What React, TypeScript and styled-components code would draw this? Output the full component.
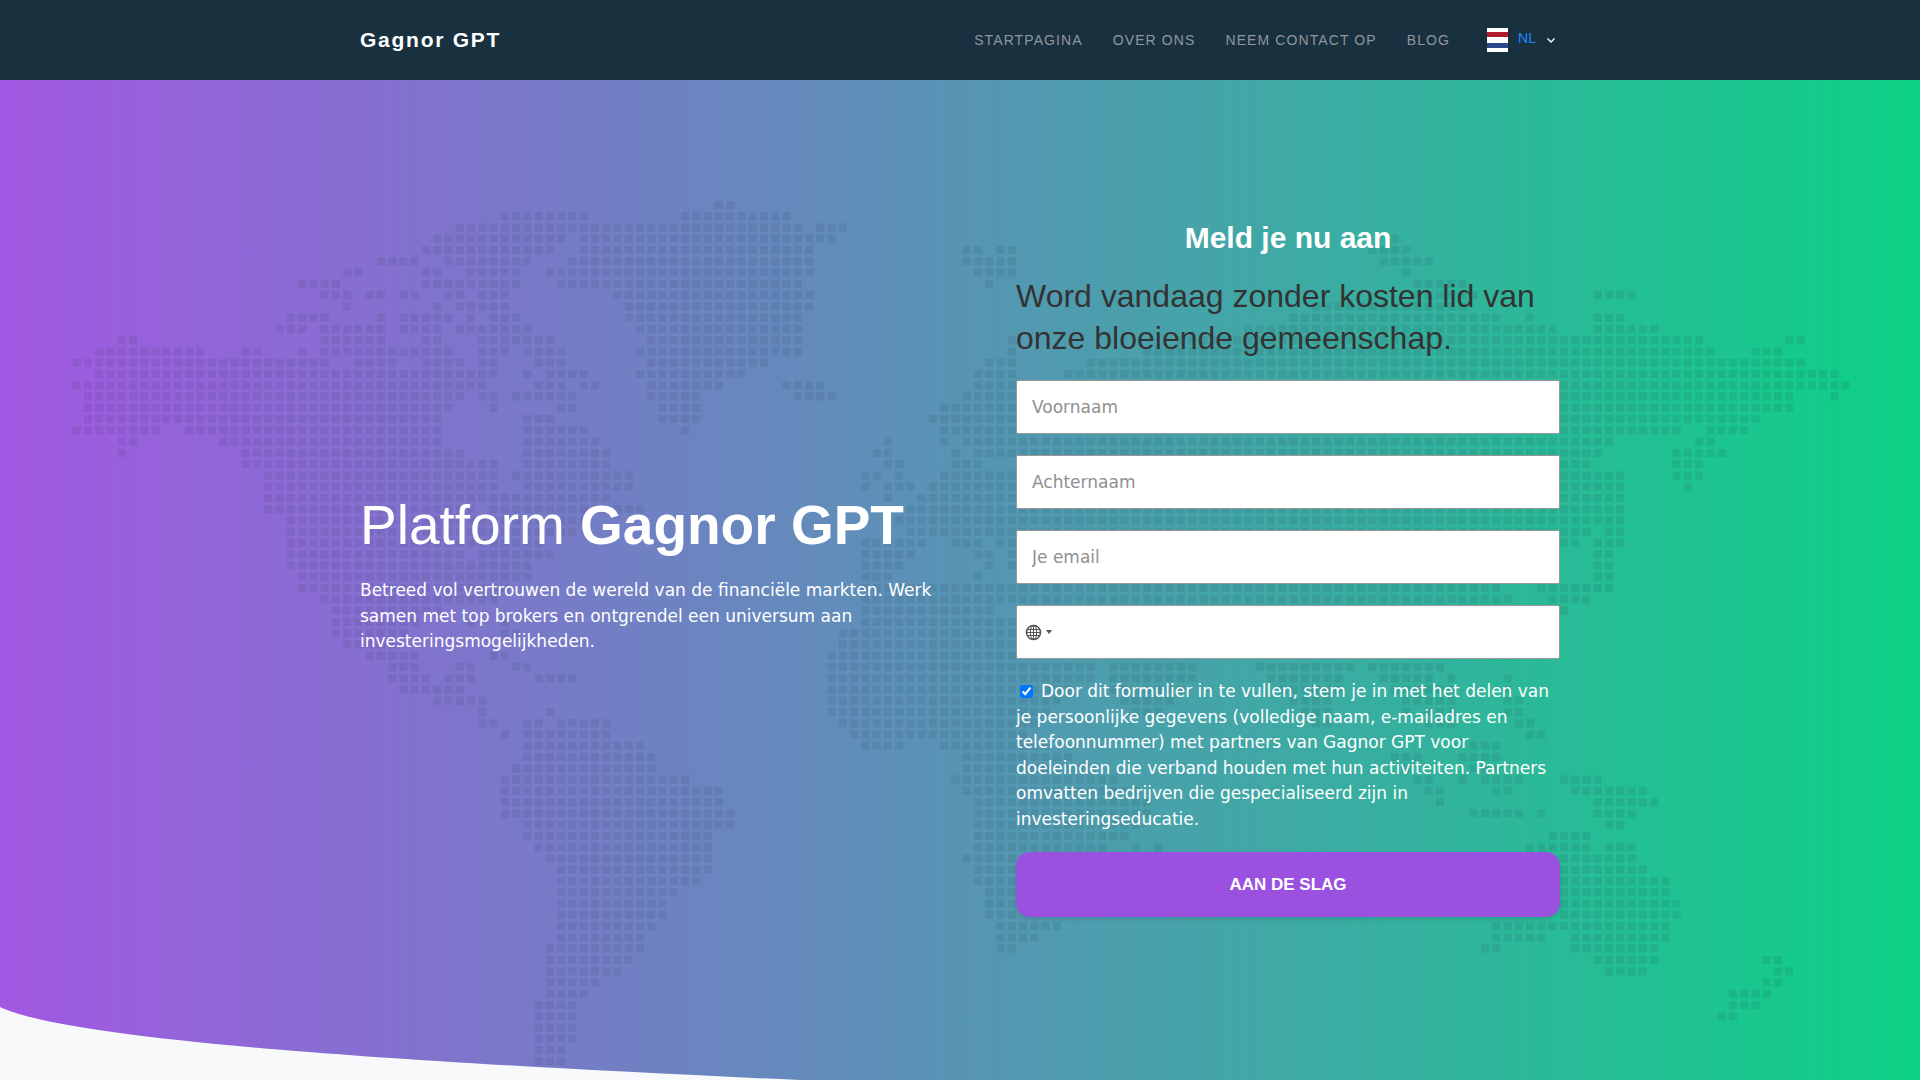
import React from "react";
import styled, { createGlobalStyle } from "styled-components";

const GlobalStyle = createGlobalStyle`
  html, body {
    margin: 0;
    padding: 0;
    background: #f8f9fa;
    font-family: "DejaVu Sans", sans-serif;
    overflow: hidden;
  }
  * { box-sizing: border-box; }
`;

const Nav = styled.nav`
  height: 80px;
  background: #19303f;
  display: flex;
  justify-content: center;
`;
const NavInner = styled.div`
  width: 1200px;
  display: flex;
  align-items: center;
  justify-content: space-between;
`;
const Brand = styled.a`
  font-family: "Liberation Sans", sans-serif;
  font-weight: 700;
  font-size: 21px;
  letter-spacing: 1.75px;
  color: #fff;
`;
const NavRight = styled.div`
  display: flex;
  align-items: center;
  gap: 30px;
`;
const NavLink = styled.a`
  font-family: "Liberation Sans", sans-serif;
  font-size: 14px;
  letter-spacing: 1.1px;
  color: #8f979d;
  text-transform: uppercase;
`;
const Lang = styled.div`
  display: flex;
  align-items: center;
  margin-left: 7px;
  margin-right: 4px;
`;
const Flag = styled.span`
  width: 21px;
  height: 24px;
  background: linear-gradient(
    #fff 0 4px,
    #b01c2e 4px 9px,
    #fff 9px 15px,
    #2b4a8c 15px 20px,
    #fff 20px
  );
`;
const LangCode = styled.span`
  font-family: "Liberation Sans", sans-serif;
  font-size: 14px;
  color: #1a8cff;
  margin: -4px 0 0 10px;
`;
const Chevron = styled.svg`
  width: 10px;
  height: 10px;
  margin: 0 0 0 10px;
`;

const Hero = styled.section`
  position: relative;
  height: 1000px;
  overflow: hidden;
  background: linear-gradient(90deg, #a258e2 0%, #0dd186 100%);
  display: flex;
  justify-content: center;
`;
const MapArt = styled.svg`
  position: absolute;
  inset: 0;
`;
const Wave = styled.svg`
  position: absolute;
  inset: 0;
`;
const Columns = styled.div`
  position: relative;
  width: 1200px;
  display: flex;
  justify-content: space-between;
  align-items: flex-start;
  padding-top: 140px;
`;
const Intro = styled.div`
  width: 600px;
  margin-top: 272px;
  color: #fff;
`;
const Title = styled.h1`
  margin: 0 0 19px;
  font-family: "Liberation Sans", sans-serif;
  font-weight: 400;
  font-size: 55px;
  line-height: 67px;
  b { font-weight: 700; }
`;
const Lead = styled.p`
  margin: 0;
  font-size: 17px;
  line-height: 25.5px;
`;
const SignUp = styled.form`
  width: 544px;
  display: flex;
  flex-direction: column;
`;
const FormTitle = styled.h3`
  margin: 0 0 19px;
  font-family: "Liberation Sans", sans-serif;
  font-weight: 700;
  font-size: 30px;
  line-height: 36px;
  color: #fff;
  text-align: center;
`;
const FormSub = styled.h4`
  margin: 0 0 21px;
  font-family: "Liberation Sans", sans-serif;
  font-weight: 400;
  font-size: 32px;
  line-height: 42px;
  color: #333;
`;
const TextField = styled.input`
  height: 54px;
  margin-bottom: 21px;
  padding: 0 15px;
  border: 1px solid #999;
  border-radius: 2px;
  background: #fff;
  font-family: "DejaVu Sans", sans-serif;
  font-size: 17px;
  outline: none;
  &::placeholder { color: #8f8f8f; }
`;
const PhoneField = styled.div`
  height: 54px;
  margin-bottom: 20px;
  padding-left: 8px;
  border: 1px solid #999;
  border-radius: 2px;
  background: #fff;
  display: flex;
  align-items: center;
`;
const Caret = styled.span`
  width: 0;
  height: 0;
  margin-left: 4px;
  border-left: 3px solid transparent;
  border-right: 3px solid transparent;
  border-top: 4px solid #555;
`;
const Consent = styled.label`
  display: block;
  font-size: 17px;
  line-height: 25.5px;
  color: #fff;
  input {
    width: 13px;
    height: 13px;
    margin: 0 8px 0 4px;
    vertical-align: -1px;
  }
`;
const Submit = styled.button`
  height: 65px;
  margin-top: 20px;
  border: 0;
  border-radius: 14px;
  background: #9b51e0;
  box-shadow: 0 2px 4px rgba(0, 0, 0, 0.12);
  font-family: "Liberation Sans", sans-serif;
  font-weight: 700;
  font-size: 17px;
  color: #fff;
`;

// filled cells of the dot map, one entry per grid row
const MAP_ROWS = [
  "57-58",
  "38-45,54-63",
  "34-64,66-68",
  "32-43,45-67,117",
  "31-42,45-65,79,80,82,83,115-118",
  "27-30,33-40,44-65,79-83,116-120",
  "24,25,31,32,35-39,42-65,80-83,118",
  "20-23,31-39,43-64,81,119-123",
  "22-24,26,27,29,30,33,34,36-38,48-65,119-124,135-138",
  "24,32,34-38,49-65,110-123",
  "19-22,27,29-33,35,37-39,49-64,108-126,129,135-137",
  "18-20,22-27,29-32,34-40,50-64,104-131,135-140",
  "4,5,22-27,31,32,36-42,51-64,83,98-144,152,153",
  "2-11,15,16,20,22-33,36-38,40-43,50-64,83,95-145,149-151",
  "0-22,25-28,31-34,36,37,41-43,51-61,81-83,90-153",
  "2-37,40,42-45,50-59,80-83,88-156",
  "0-36,41-43,45,46,51-57,63-66,80-157",
  "1-34,36,37,39-44,51-55,64-67,79-152,156",
  "1-33,37,43,44,52-55,77-152",
  "1-32,40-42,52-55,76-149",
  "0-7,10-32,40-45,54,77-142,145-148",
  "4,5,13-32,40-46,72,77,79-136,144,145",
  "4,15-34,40-47,71,72,78,80-135,142-146",
  "15-37,40-47,72,73,78-80,84-134,142-144",
  "17-37,39-49,70,71,73,77-137,142-144",
  "17-37,40-49,70,72-74,76-137,143",
  "17-47,72,75-137",
  "17-35,37-50,74-137",
  "19-45,73-137",
  "19-44,74-134,136,137",
  "19-41,70-75,78-80,82-133,135-137",
  "19-34,36-42,70-74,80,81,83,135,136",
  "19-40,70-73,81,83,135,136",
  "20-40,70-72,80,135,136",
  "20-38,70-126,130-136",
  "22-37,70-127,131-134",
  "23-32,70-81,132",
  "23-30,35,38,70-83",
  "23-29,38,39,68-83",
  "24-28,68-83",
  "26-30,37,38,67-83",
  "28-30,34,35,39,40,67-90,92-99,105-113,115-121",
  "28-31,33-35,41-44,67-90,92-99,106-112,116-120,122,127",
  "29-34,67-88,92-98,107-112,117-122,127",
  "32-36,67-87,93-97,108-111,118-122,127,128",
  "36,42,67-86,94-96,109-111,118,120-122,127,128",
  "36,37,40,41,43-47,68-85,110,111,120-122,128,129",
  "38,40-47,69-84,129,130",
  "40-50,70-73,77-86,124-126",
  "40-51,79-88,117-119,123-126",
  "39-51,79-90,118,124-126",
  "38-54,78-92,119,120,123,125-128,132-135",
  "38-57,79-94,120,121,126,127,133-139",
  "38-57,80-95,121,135-140",
  "38-58,80-95,124-128,130,135-138",
  "40-58,80-94,136,137",
  "40-56,80-93,131-134",
  "41-56,80-91,94,96,129-134,136-138",
  "42-56,79-83,132-138",
  "43-56,80-83,132-139",
  "43-55,80-83,132-141",
  "43-53,81-83,132-141",
  "43-52,81-83,132-142",
  "43-52,81-83,132-142",
  "43-51,82-87,126-141",
  "43-50,82-85,126-130,133-141",
  "42-50,82,83,125,126,133-140",
  "42-49,135-140,150,151",
  "42-48,136-139,151,152",
  "42-46,150,151",
  "42-45,147-150",
  "41-44,147-149",
  "41-44,146,147",
  "41-44",
  "41-44",
  "41-43",
  "41-43",
];

const PITCH = 11.267;

function buildMapPath() {
  let d = "";
  MAP_ROWS.forEach((row, r) => {
    const y = (201 + r * PITCH).toFixed(1);
    row.split(",").forEach((run) => {
      const [from, to] = run.split("-").map(Number);
      for (let c = from; c <= (to ?? from); c++) {
        const x = (72.7 + c * PITCH).toFixed(1);
        d += `M${x} ${y}h8v8h-8z`;
      }
    });
  });
  return d;
}

const mapPath = buildMapPath();

function GlobeIcon() {
  return (
    <svg width="17" height="17" viewBox="0 0 17 17" fill="none" stroke="#555" strokeWidth="1">
      <circle cx="8.5" cy="8.5" r="7" strokeWidth="1.6" />
      <ellipse cx="8.5" cy="8.5" rx="3.2" ry="7" />
      <path d="M8.5 1.5v14M2 5.5h13M2 11.5h13M1.5 8.5h14" />
    </svg>
  );
}

export default function App() {
  return (
    <>
      <GlobalStyle />
      <Nav>
        <NavInner>
          <Brand>Gagnor GPT</Brand>
          <NavRight>
            <NavLink>Startpagina</NavLink>
            <NavLink>Over ons</NavLink>
            <NavLink>Neem contact op</NavLink>
            <NavLink>Blog</NavLink>
            <Lang>
              <Flag />
              <LangCode>NL</LangCode>
              <Chevron viewBox="0 0 10 10" fill="none" stroke="#fff" strokeWidth="1.4">
                <path d="M1.5 3.5 5 7l3.5-3.5" />
              </Chevron>
            </Lang>
          </NavRight>
        </NavInner>
      </Nav>
      <Hero>
        <MapArt width="1920" height="1000" viewBox="0 80 1920 1000">
          <path d={mapPath} fill="rgba(26,48,64,0.1)" />
        </MapArt>
        <Wave width="1920" height="1000" viewBox="0 80 1920 1000">
          <path d="M0 1007C60 1035 300 1058 800 1080H0Z" fill="#f8f9fa" />
        </Wave>
        <Columns>
          <Intro>
            <Title>
              Platform <b>Gagnor GPT</b>
            </Title>
            <Lead>
              Betreed vol vertrouwen de wereld van de financiële markten. Werk samen met top brokers
              en ontgrendel een universum aan investeringsmogelijkheden.
            </Lead>
          </Intro>
          <SignUp>
            <FormTitle>Meld je nu aan</FormTitle>
            <FormSub>Word vandaag zonder kosten lid van onze bloeiende gemeenschap.</FormSub>
            <TextField placeholder="Voornaam" />
            <TextField placeholder="Achternaam" />
            <TextField placeholder="Je email" />
            <PhoneField>
              <GlobeIcon />
              <Caret />
            </PhoneField>
            <Consent>
              <input type="checkbox" defaultChecked />
              Door dit formulier in te vullen, stem je in met het delen van je persoonlijke gegevens
              (volledige naam, e-mailadres en telefoonnummer) met partners van Gagnor GPT voor
              doeleinden die verband houden met hun activiteiten. Partners omvatten bedrijven die
              gespecialiseerd zijn in investeringseducatie.
            </Consent>
            <Submit type="button">AAN DE SLAG</Submit>
          </SignUp>
        </Columns>
      </Hero>
    </>
  );
}
